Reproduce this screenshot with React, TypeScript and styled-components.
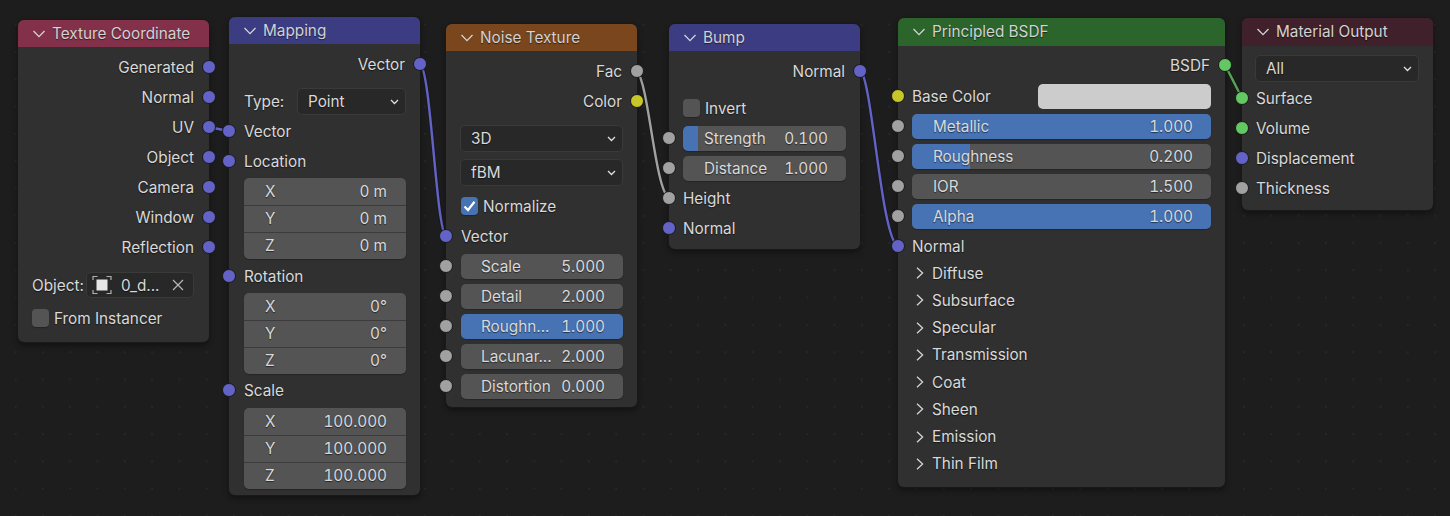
import React from "react";
import styled, { createGlobalStyle } from "styled-components";

const Global = createGlobalStyle`
  html, body { margin: 0; padding: 0; background: #1d1d1d; overflow: hidden; }
  * { box-sizing: border-box; }
`;

const Canvas = styled.div`
  position: relative;
  width: 1450px;
  height: 516px;
  background-color: #1d1d1d;
  background-image: radial-gradient(circle at center, #272727 0, #272727 0.9px, transparent 1.1px);
  background-size: 27.3px 27.3px;
  background-position: 2px 11px;
  font-family: Inter, "Liberation Sans", sans-serif;
  font-size: 15.3px;
  color: #d9d9d9;
  text-shadow: 0 1px 1px rgba(0, 0, 0, 0.55);
  overflow: hidden;
`;

const Wires = styled.svg`
  position: absolute;
  inset: 0;
  width: 1450px;
  height: 516px;
`;

const NodeBox = styled.section<{ $x: number; $y: number; $w: number; $pb: number; $pl: number }>`
  --pl: ${(p) => p.$pl}px;
  position: absolute;
  left: ${(p) => p.$x}px;
  top: ${(p) => p.$y}px;
  width: ${(p) => p.$w}px;
  padding-bottom: ${(p) => p.$pb}px;
  background: #303030;
  border-radius: 6px;
  box-shadow: 0 0 0 1px #191919, 0 3px 6px rgba(0, 0, 0, 0.45);
`;

const Header = styled.header<{ $c: string; $tall?: boolean }>`
  display: flex;
  align-items: center;
  height: ${(p) => (p.$tall ? 28 : 27)}px;
  margin-bottom: ${(p) => (p.$tall ? 4 : 5)}px;
  padding: 0 0 ${(p) => (p.$tall ? 1 : 0)}px 15px;
  gap: 7px;
  background: ${(p) => p.$c};
  border-radius: 6px 6px 0 0;
  color: #d2d2d2;
`;

const Row = styled.div<{ $end?: boolean; $mt?: number }>`
  position: relative;
  display: flex;
  align-items: center;
  height: 30px;
  padding: 0 15px 0 var(--pl);
  margin-top: ${(p) => p.$mt ?? 0}px;
  justify-content: ${(p) => (p.$end ? "flex-end" : "flex-start")};
`;

const FieldRow = styled(Row)`
  padding-right: 14px;
`;

const Socket = styled.span<{ $c: string; $right?: boolean }>`
  position: absolute;
  top: 8px;
  ${(p) => (p.$right ? "right: -7px;" : "left: -7px;")}
  width: 14px;
  height: 14px;
  border-radius: 50%;
  background: ${(p) => p.$c};
  border: 1px solid #191919;
`;

const Field = styled.div<{ $fill?: number }>`
  display: flex;
  flex: 1;
  align-items: center;
  justify-content: space-between;
  height: 25px;
  padding: 0 18px 0 calc(35px - var(--pl));
  border-radius: 5px;
  background: ${(p) =>
    p.$fill
      ? `linear-gradient(90deg, #4772b3 ${p.$fill}%, #545454 ${p.$fill}%)`
      : "#545454"};
  box-shadow: 0 1px 1px rgba(0, 0, 0, 0.25);
`;

const Value = styled.span`
  font-variant-numeric: tabular-nums;
`;

const Group = styled.div<{ $mt: number }>`
  display: flex;
  flex-direction: column;
  margin: ${(p) => p.$mt}px 14px 0 var(--pl);
  border-radius: 5px;
  overflow: hidden;
  background: #545454;
  box-shadow: 0 1px 1px rgba(0, 0, 0, 0.25);
`;

const GroupRow = styled.div`
  display: flex;
  align-items: center;
  justify-content: space-between;
  height: 27px;
  padding: 0 19px 1px 21px;
  & + & { border-top: 1px solid #3b3b3b; }
`;

const SelectBox = styled.div<{ $w?: number; $ml?: number; $mr?: number; $mt?: number }>`
  display: flex;
  align-items: center;
  justify-content: space-between;
  height: 27px;
  flex: ${(p) => (p.$w ? "none" : "1")};
  width: ${(p) => (p.$w ? `${p.$w}px` : "auto")};
  margin-left: ${(p) => p.$ml ?? 0}px;
  margin-right: ${(p) => p.$mr ?? 0}px;
  margin-top: ${(p) => p.$mt ?? 0}px;
  padding: 0 6px 0 10px;
  background: #282828;
  border: 1px solid #3a3a3a;
  border-radius: 5px;
`;

const SelectRow = styled.div<{ $mt: number }>`
  display: flex;
  align-items: center;
  justify-content: space-between;
  margin: ${(p) => p.$mt}px 14px 0 var(--pl);
`;

const CheckBox = styled.span<{ $on?: boolean }>`
  display: inline-flex;
  align-items: center;
  justify-content: center;
  width: 17px;
  height: 18px;
  margin-right: 5px;
  border-radius: 4px;
  background: ${(p) => (p.$on ? "#4772b3" : "#545454")};
  box-shadow: 0 1px 1px rgba(0, 0, 0, 0.25);
`;

const Swatch = styled.div`
  width: 173px;
  height: 25px;
  margin-left: auto;
  margin-right: -1px;
  border-radius: 5px;
  background: #cccccc;
`;

const PanelList = styled.div`
  display: flex;
  flex-direction: column;
  margin-top: -1.5px;
`;

const PanelRow = styled.div`
  display: flex;
  align-items: center;
  height: 27.25px;
  padding-left: 18px;
  gap: 8px;
`;

const ObjectPick = styled.div`
  display: flex;
  align-items: center;
  width: 108px;
  height: 26px;
  margin-left: auto;
  padding: 0 9px 0 5px;
  background: #282828;
  border: 1px solid #3a3a3a;
  border-radius: 5px;
`;

const ObjectName = styled.span`
  margin-left: 9px;
  flex: 1;
`;

const Icon = styled.svg`
  flex: none;
  display: block;
`;

const BLUE = "#6363c7";
const GREY = "#a1a1a1";
const YEL = "#c7c729";
const GRN = "#63c763";

const ChevDown = () => (
  <Icon width="12" height="8" viewBox="0 0 12 8" fill="none">
    <path d="M0.5 1 L6 6.6 L11.5 1" stroke="#d4d4d4" strokeWidth="1.3" />
  </Icon>
);

const ChevSmall = () => (
  <Icon width="9" height="6" viewBox="0 0 9 6" fill="none">
    <path d="M1 1 L4.5 4.5 L8 1" stroke="#e0e0e0" strokeWidth="1.3" />
  </Icon>
);

const ChevRight = () => (
  <Icon width="8" height="12" viewBox="0 0 8 12" fill="none">
    <path d="M1 0.8 L6.6 6 L1 11.2" stroke="#d4d4d4" strokeWidth="1.3" />
  </Icon>
);

const Check = () => (
  <Icon width="13" height="12" viewBox="0 0 13 12" fill="none">
    <path d="M1.5 6.5 L5 10 L11.5 1.8" stroke="#ffffff" strokeWidth="2.2" />
  </Icon>
);

const ObjectIcon = () => (
  <Icon width="20" height="20" viewBox="0 0 20 20" fill="none">
    <rect x="4.5" y="4.5" width="11" height="11" fill="#e6e6e6" />
    <path
      d="M1 5 V1.5 H5.5 M14.5 1.5 H19 V5 M19 15 V18.5 H14.5 M5.5 18.5 H1 V15"
      stroke="#b0b0b0"
      strokeWidth="1.2"
    />
  </Icon>
);

const CloseX = () => (
  <Icon width="12" height="12" viewBox="0 0 12 12" fill="none">
    <path d="M1 1 L11 11 M11 1 L1 11" stroke="#b8b8b8" strokeWidth="1.2" />
  </Icon>
);

const Node: React.FC<{
  title: string;
  color: string;
  x: number;
  y: number;
  w?: number;
  pb: number;
  pl?: number;
  tall?: boolean;
  children: React.ReactNode;
}> = ({ title, color, x, y, w = 191, pb, pl = 14, tall, children }) => (
  <NodeBox $x={x} $y={y} $w={w} $pb={pb} $pl={pl}>
    <Header $c={color} $tall={tall}>
      <ChevDown />
      <span>{title}</span>
    </Header>
    {children}
  </NodeBox>
);

const Out: React.FC<{ label: string; c: string }> = ({ label, c }) => (
  <Row $end>
    {label}
    <Socket $c={c} $right />
  </Row>
);

const In: React.FC<{ label: string; c: string; mt?: number }> = ({ label, c, mt }) => (
  <Row $mt={mt}>
    <Socket $c={c} />
    {label}
  </Row>
);

const Num: React.FC<{ label: string; value: string; fill?: number; mt?: number }> = ({
  label,
  value,
  fill,
  mt,
}) => (
  <FieldRow $mt={mt}>
    <Socket $c={GREY} />
    <Field $fill={fill}>
      <span>{label}</span>
      <Value>{value}</Value>
    </Field>
  </FieldRow>
);

const Vec: React.FC<{ mt: number; values: string[] }> = ({ mt, values }) => (
  <Group $mt={mt}>
    {["X", "Y", "Z"].map((a, i) => (
      <GroupRow key={a}>
        <span>{a}</span>
        <Value>{values[i]}</Value>
      </GroupRow>
    ))}
  </Group>
);

const Wire: React.FC<{ d: string; c: string }> = ({ d, c }) => (
  <>
    <path d={d} stroke="#191919" strokeWidth="4" />
    <path d={d} stroke={c} strokeWidth="2.4" />
  </>
);

const panels = ["Diffuse", "Subsurface", "Specular", "Transmission", "Coat", "Sheen", "Emission", "Thin Film"];

export default function App() {
  return (
    <Canvas>
      <Global />
      <Wires viewBox="0 0 1450 516" fill="none">
        <Wire d="M208 127 L229 131" c={BLUE} />
        <Wire d="M420 64 C 431 70, 436 230, 446 236" c={BLUE} />
        <Wire d="M637 71 C 649 85, 655 190, 669 198" c="#a1a1a1" />
        <Wire d="M860 71 C 872 75, 881 240, 898 246" c={BLUE} />
        <Wire d="M1225 65 L1242 98" c="#55a855" />
      </Wires>

      <Node title="Texture Coordinate" color="#83314a" x={18} y={20} pb={9}>
        {["Generated", "Normal", "UV", "Object", "Camera", "Window", "Reflection"].map((l) => (
          <Out key={l} label={l} c={BLUE} />
        ))}
        <Row $mt={8}>
          Object:
          <ObjectPick>
            <ObjectIcon />
            <ObjectName>0_d...</ObjectName>
            <CloseX />
          </ObjectPick>
        </Row>
        <Row $mt={3}>
          <CheckBox />
          From Instancer
        </Row>
      </Node>

      <Node title="Mapping" color="#3c3c83" x={229} y={17} pb={6} pl={15}>
        <Out label="Vector" c={BLUE} />
        <SelectRow $mt={9}>
          Type:
          <SelectBox $w={109}>
            Point
            <ChevSmall />
          </SelectBox>
        </SelectRow>
        <In label="Vector" c={BLUE} mt={1} />
        <In label="Location" c={BLUE} />
        <Vec mt={2} values={["0 m", "0 m", "0 m"]} />
        <In label="Rotation" c={BLUE} mt={2} />
        <Vec mt={2} values={["0°", "0°", "0°"]} />
        <In label="Scale" c={BLUE} mt={1} />
        <Vec mt={3} values={["100.000", "100.000", "100.000"]} />
      </Node>

      <Node title="Noise Texture" color="#79461d" x={446} y={24} pb={6} pl={15}>
        <Out label="Fac" c={GREY} />
        <Out label="Color" c={YEL} />
        <SelectBox $ml={14} $mr={14} $mt={9}>
          3D
          <ChevSmall />
        </SelectBox>
        <SelectBox $ml={14} $mr={14} $mt={7}>
          fBM
          <ChevSmall />
        </SelectBox>
        <Row $mt={5}>
          <CheckBox $on>
            <Check />
          </CheckBox>
          Normalize
        </Row>
        <In label="Vector" c={BLUE} />
        <Num label="Scale" value="5.000" />
        <Num label="Detail" value="2.000" />
        <Num label="Roughn..." value="1.000" fill={100} />
        <Num label="Lacunar..." value="2.000" />
        <Num label="Distortion" value="0.000" />
      </Node>

      <Node title="Bump" color="#3c3c83" x={669} y={24} pb={6}>
        <Out label="Normal" c={BLUE} />
        <Row $mt={7}>
          <CheckBox />
          Invert
        </Row>
        <Num label="Strength" value="0.100" fill={9} />
        <Num label="Distance" value="1.000" />
        <In label="Height" c={GREY} />
        <In label="Normal" c={BLUE} />
      </Node>

      <Node title="Principled BSDF" color="#2b652b" x={898} y={18} w={327} pb={9} tall>
        <Out label="BSDF" c={GRN} />
        <Row $mt={1}>
          <Socket $c={YEL} />
          Base Color
          <Swatch />
        </Row>
        <Num label="Metallic" value="1.000" fill={100} />
        <Num label="Roughness" value="0.200" fill={19.5} />
        <Num label="IOR" value="1.500" />
        <Num label="Alpha" value="1.000" fill={100} />
        <In label="Normal" c={BLUE} />
        <PanelList>
          {panels.map((p) => (
            <PanelRow key={p}>
              <ChevRight />
              {p}
            </PanelRow>
          ))}
        </PanelList>
      </Node>

      <Node title="Material Output" color="#40202a" x={1242} y={18} pb={7} tall>
        <SelectBox $ml={13} $mr={14} $mt={9}>
          All
          <ChevSmall />
        </SelectBox>
        <In label="Surface" c={GRN} mt={1} />
        <In label="Volume" c={GRN} />
        <In label="Displacement" c={BLUE} />
        <In label="Thickness" c={GREY} />
      </Node>
    </Canvas>
  );
}
